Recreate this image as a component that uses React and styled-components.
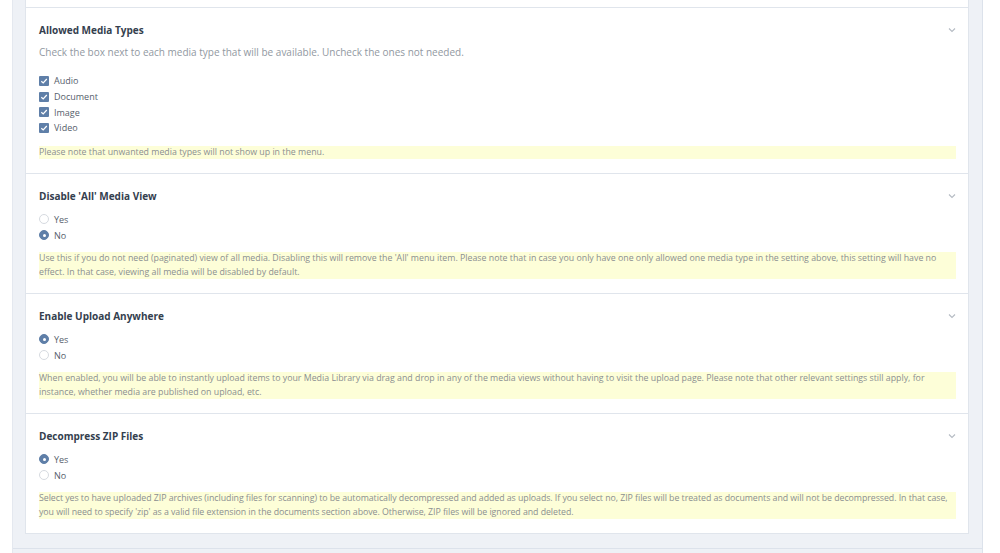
import React from "react";
import styled, { createGlobalStyle } from "styled-components";

const Global = createGlobalStyle`
  html, body { margin: 0; padding: 0; background: #ffffff; }
  body { font-family: "Open Sans", "Liberation Sans", sans-serif; overflow: hidden; }
  * { box-sizing: border-box; }
`;

const Page = styled.div`
  width: 1000px;
  height: 553px;
  overflow: hidden;
  background: #ffffff;
`;

const Wrapper = styled.div`
  margin-left: 12px;
  width: 971px;
  background: #eef1f6;
  border-left: 1px solid #e4e8ef;
  border-right: 1px solid #dce2eb;
`;

const Inner = styled.div`
  padding: 0 13px 14px 12px;
  border-bottom: 1px solid #dce2eb;
`;

const FooterStrip = styled.div`
  height: 6px;
  background: #eef1f6;
`;

const Card = styled.div`
  background: #ffffff;
  border: 1px solid #e0e5ec;
  border-top: none;
`;

const Stub = styled.div`
  height: 7px;
`;

const Section = styled.section`
  border-top: 1px solid #e0e5ec;
  padding: 14px 12px ${(p) => p.$bottom || 14}px 13px;
  display: flex;
  flex-direction: column;
`;

const Header = styled.div`
  display: flex;
  align-items: center;
  justify-content: space-between;
  height: 16px;
`;

const Title = styled.h3`
  margin: 0;
  font-size: 10px;
  font-weight: 700;
  line-height: 15px;
  color: #34404e;
`;

const Chevron = styled.svg`
  width: 8px;
  height: 6px;
`;

const Desc = styled.p`
  margin: 6px 0 0;
  font-size: 10px;
  line-height: 16px;
  color: #9198a1;
`;

const Options = styled.div`
  display: flex;
  flex-direction: column;
  margin-top: ${(p) => p.$top}px;
`;

const Option = styled.label`
  display: flex;
  align-items: center;
  height: ${(p) => p.$h || 16}px;
  gap: 5px;
  font-size: 9px;
  color: #56606c;
`;

const Box = styled.span`
  width: 10px;
  height: 10px;
  background: #5f7fa8;
  border-radius: 1px;
  display: flex;
  align-items: center;
  justify-content: center;
`;

const Radio = styled.span`
  width: 10px;
  height: 10px;
  border-radius: 50%;
  display: flex;
  align-items: center;
  justify-content: center;
  background: ${(p) => (p.$on ? "#5f7fa8" : "#ffffff")};
  border: 1px solid ${(p) => (p.$on ? "#5f7fa8" : "#d6dae0")};
  &::after {
    content: "";
    display: ${(p) => (p.$on ? "block" : "none")};
    width: 3px;
    height: 3px;
    border-radius: 50%;
    background: #ffffff;
  }
`;

const Note = styled.div`
  margin-top: ${(p) => p.$top}px;
  background: #fdfed8;
  font-size: 8.8px;
  line-height: 13.5px;
  letter-spacing: ${(p) => p.$spacing || 0}px;
  color: #8b8f90;
`;

const ChevronIcon = () => (
  <Chevron viewBox="0 0 8 6">
    <polyline points="1,1.5 4,4.5 7,1.5" fill="none" stroke="#b5bbc3" strokeWidth="1.1" />
  </Chevron>
);

const Check = () => (
  <svg width="8" height="8" viewBox="0 0 8 8">
    <polyline points="1.3,4.2 3.2,6 6.8,2" fill="none" stroke="#ffffff" strokeWidth="1.2" />
  </svg>
);

const sections = [
  {
    title: "Disable 'All' Media View",
    options: [
      ["Yes", false],
      ["No", true],
    ],
    note:
      "Use this if you do not need (paginated) view of all media. Disabling this will remove the 'All' menu item. Please note that in case you only have one only allowed one media type in the setting above, this setting will have no effect. In that case, viewing all media will be disabled by default.",
  },
  {
    title: "Enable Upload Anywhere",
    options: [
      ["Yes", true],
      ["No", false],
    ],
    note:
      "When enabled, you will be able to instantly upload items to your Media Library via drag and drop in any of the media views without having to visit the upload page. Please note that other relevant settings still apply, for instance, whether media are published on upload, etc.",
  },
  {
    title: "Decompress ZIP Files",
    options: [
      ["Yes", true],
      ["No", false],
    ],
    spacing: -0.05,
    note:
      "Select yes to have uploaded ZIP archives (including files for scanning) to be automatically decompressed and added as uploads. If you select no, ZIP files will be treated as documents and will not be decompressed. In that case, you will need to specify 'zip' as a valid file extension in the documents section above. Otherwise, ZIP files will be ignored and deleted.",
  },
];

export default function App() {
  return (
    <Page>
      <Global />
      <Wrapper>
        <Inner>
          <Card>
            <Stub />
            <Section $bottom={14}>
              <Header>
                <Title>Allowed Media Types</Title>
                <ChevronIcon />
              </Header>
              <Desc>
                Check the box next to each media type that will be available. Uncheck the ones not needed.
              </Desc>
              <Options $top={13}>
                {["Audio", "Document", "Image", "Video"].map((t) => (
                  <Option key={t} $h={15.7}>
                    <Box>
                      <Check />
                    </Box>
                    {t}
                  </Option>
                ))}
              </Options>
              <Note $top={10}>Please note that unwanted media types will not show up in the menu.</Note>
            </Section>
            {sections.map((s) => (
              <Section key={s.title}>
                <Header>
                  <Title>{s.title}</Title>
                  <ChevronIcon />
                </Header>
                <Options $top={7}>
                  {s.options.map(([label, on]) => (
                    <Option key={label}>
                      <Radio $on={on} />
                      {label}
                    </Option>
                  ))}
                </Options>
                <Note $top={9} $spacing={s.spacing}>
                  {s.note}
                </Note>
              </Section>
            ))}
          </Card>
        </Inner>
        <FooterStrip />
      </Wrapper>
    </Page>
  );
}
